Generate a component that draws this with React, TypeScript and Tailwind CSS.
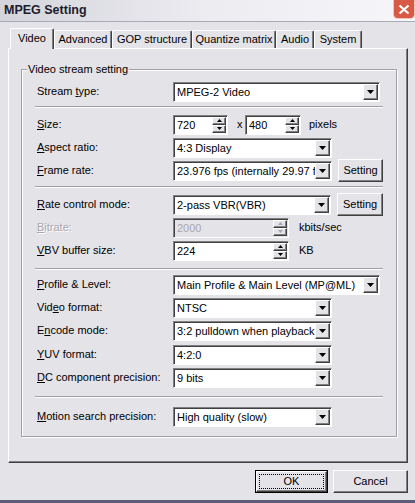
import React from "react"

const raised =
  "border border-t-white border-l-white border-r-[#404040] border-b-[#404040] shadow-[inset_-1px_-1px_0_#808080]"
const sunken =
  "border border-t-[#808080] border-l-[#808080] border-r-white border-b-white shadow-[inset_1px_1px_0_#404040]"

const tabs = [
  { name: "Video", w: "w-[44px]" },
  { name: "Advanced", w: "w-[58px]" },
  { name: "GOP structure", w: "w-[80px]" },
  { name: "Quantize matrix", w: "w-[84px]" },
  { name: "Audio", w: "w-[38px]" },
  { name: "System", w: "w-[48px]" },
]

function Tri({ up = false, w = 7, h = 4, color = "#000" }: { up?: boolean; w?: number; h?: number; color?: string }) {
  const pts = up ? `0,${h} ${w},${h} ${w / 2},0` : `0,0 ${w},0 ${w / 2},${h}`
  return (
    <svg width={w} height={h} viewBox={`0 0 ${w} ${h}`}>
      <polygon points={pts} fill={color} />
    </svg>
  )
}

function Combo({ value, className = "" }: { value: string; className?: string }) {
  return (
    <div className={`flex h-[20px] items-stretch bg-white p-[1px] ${sunken} ${className}`}>
      <span className="flex-1 overflow-hidden whitespace-nowrap pl-[2px] leading-[16px]">{value}</span>
      <span className={`flex w-[15px] shrink-0 items-center justify-center bg-[#e4e3e8] ${raised}`}>
        <Tri />
      </span>
    </div>
  )
}

function Spin({ value, className = "", disabled = false }: { value: string; className?: string; disabled?: boolean }) {
  const c = disabled ? "#a8a7b0" : "#000"
  return (
    <div
      className={`flex h-[20px] items-stretch p-[1px] ${sunken} ${className} ${
        disabled ? "bg-[#e4e3e8] text-[#a8a7b0]" : "bg-white"
      }`}
    >
      <span className="flex-1 pl-[2px] leading-[16px]">{value}</span>
      <span className="flex w-[14px] shrink-0 flex-col">
        <span className={`flex flex-1 items-center justify-center bg-[#e4e3e8] ${raised}`}>
          <Tri up w={5} h={3} color={c} />
        </span>
        <span className={`flex flex-1 items-center justify-center bg-[#e4e3e8] ${raised}`}>
          <Tri w={5} h={3} color={c} />
        </span>
      </span>
    </div>
  )
}

function Row({
  label,
  children,
  className = "",
  disabled = false,
}: {
  label: React.ReactNode
  children: React.ReactNode
  className?: string
  disabled?: boolean
}) {
  return (
    <div className={`flex h-[23px] items-center ${className}`}>
      <span
        className={`w-[138px] shrink-0 pl-[2px] ${disabled ? "text-[#a8a7b0] [text-shadow:1px_1px_0_#fff]" : ""}`}
      >
        {label}
      </span>
      {children}
    </div>
  )
}

function Sep({ className = "" }: { className?: string }) {
  return <div className={`h-[2px] border-t border-b border-t-[#a09fa8] border-b-white ${className}`} />
}

function SettingBtn() {
  return <button className={`ml-[6px] h-[23px] w-[46px] bg-[#e4e3e8] ${raised}`}>Setting</button>
}

export default function App() {
  return (
    <div className="flex h-[503px] w-[415px] flex-col overflow-hidden bg-[#e4e3e8] font-['Liberation_Sans',Arial,sans-serif] text-[11px] text-black">
      <div className="flex h-[22px] shrink-0 items-start justify-between border-b border-[#a9a8b6] bg-[#e6e6ec] bg-linear-to-r from-[#d4d4dc] via-[#ececf1] to-[#f7f7fa]">
        <span className="pl-[4px] pt-[3px] text-[12.5px] font-bold leading-[15px] text-[#1c1c2c]">MPEG Setting</span>
        <div className="mr-[1px] flex h-[18px] w-[20px] shrink-0 items-center justify-center rounded-b-[3px] bg-[#d85a46] outline outline-[#f0c4b8]">
          <svg width="12" height="11" viewBox="0 0 12 11">
            <path d="M1.5 1.5L10.5 9.5M10.5 1.5L1.5 9.5" stroke="white" strokeWidth="2.2" />
          </svg>
        </div>
      </div>

      <div className="ml-[10px] mt-[5px] flex h-[21px] shrink-0 items-end">
        {tabs.map((t, i) =>
          i === 0 ? (
            <div
              key={t.name}
              className={`relative z-10 -mb-px flex h-[21px] items-center justify-center rounded-t-[2px] border-l border-t border-r border-l-white border-t-white border-r-[#404040] bg-[#e4e3e8] pb-[2px] shadow-[inset_-1px_0_0_#808080] ${t.w}`}
            >
              {t.name}
            </div>
          ) : (
            <div
              key={t.name}
              className={`flex h-[18px] items-center justify-center rounded-t-[2px] border-l border-t border-r border-l-white border-t-white border-r-[#404040] shadow-[inset_-1px_0_0_#808080] ${t.w}`}
            >
              {t.name}
            </div>
          )
        )}
      </div>

      <div className={`ml-[8px] h-[415px] w-[400px] shrink-0 ${raised}`}>
        <div className="relative ml-[12px] mt-[20px] w-[376px] border border-[#a09fa8] px-[13px] pb-[8px] pt-[10px] shadow-[1px_1px_0_#fff,inset_1px_1px_0_#fff]">
          <span className="absolute -top-[7px] left-[5px] bg-[#e4e3e8] px-[1px] leading-[13px]">
            Video stream setting
          </span>

          <Row label={<>Stream <u>t</u>ype:</>}>
            <Combo value="MPEG-2 Video" className="w-[207px]" />
          </Row>
          <Sep className="mt-[3px]" />

          <Row className="mt-[5px]" label={<><u>S</u>ize:</>}>
            <Spin value="720" className="w-[55px]" />
            <span className="ml-[9px] w-[8px]">x</span>
            <Spin value="480" className="w-[56px]" />
            <span className="ml-[8px]">pixels</span>
          </Row>
          <Row label={<><u>A</u>spect ratio:</>}>
            <Combo value="4:3 Display" className="w-[159px]" />
          </Row>
          <Row label={<><u>F</u>rame rate:</>}>
            <Combo value="23.976 fps (internally 29.97 fps)" className="w-[159px]" />
            <SettingBtn />
          </Row>
          <Sep className="mt-[4px]" />

          <Row className="mt-[5px]" label={<><u>R</u>ate control mode:</>}>
            <Combo value="2-pass VBR(VBR)" className="w-[159px]" />
            <SettingBtn />
          </Row>
          <Row disabled label={<><u>B</u>itrate:</>}>
            <Spin disabled value="2000" className="w-[116px]" />
            <span className="ml-[10px]">kbits/sec</span>
          </Row>
          <Row label={<><u>V</u>BV buffer size:</>}>
            <Spin value="224" className="w-[116px]" />
            <span className="ml-[10px]">KB</span>
          </Row>
          <Sep className="mt-[6px]" />

          <Row className="mt-[3px]" label={<><u>P</u>rofile &amp; Level:</>}>
            <Combo value="Main Profile & Main Level (MP@ML)" className="w-[207px]" />
          </Row>
          <Row label={<>Vid<u>e</u>o format:</>}>
            <Combo value="NTSC" className="w-[159px]" />
          </Row>
          <Row label={<>E<u>n</u>code mode:</>}>
            <Combo value="3:2 pulldown when playback" className="w-[159px]" />
          </Row>
          <Row className="mt-[1px]" label={<><u>Y</u>UV format:</>}>
            <Combo value="4:2:0" className="w-[159px]" />
          </Row>
          <Row label={<><u>D</u>C component precision:</>}>
            <Combo value="9 bits" className="w-[159px]" />
          </Row>
          <Sep className="mt-[7px]" />

          <Row className="mt-[7px]" label={<><u>M</u>otion search precision:</>}>
            <Combo value="High quality (slow)" className="w-[159px]" />
          </Row>
        </div>
      </div>

      <div className="mt-[7px] flex shrink-0 justify-end gap-[5px] pr-[7px]">
        <button className="h-[23px] w-[73px] border border-black bg-[#e4e3e8] p-0">
          <div className={`flex h-full w-full items-center justify-center p-[2px] ${raised}`}>
            <div className="flex h-full w-full items-center justify-center border border-dotted border-black">
              OK
            </div>
          </div>
        </button>
        <button className={`h-[23px] w-[75px] bg-[#e4e3e8] ${raised}`}>Cancel</button>
      </div>

      <div className="mt-auto h-[3px] shrink-0 bg-[#5f5c7a]" />
    </div>
  )
}
